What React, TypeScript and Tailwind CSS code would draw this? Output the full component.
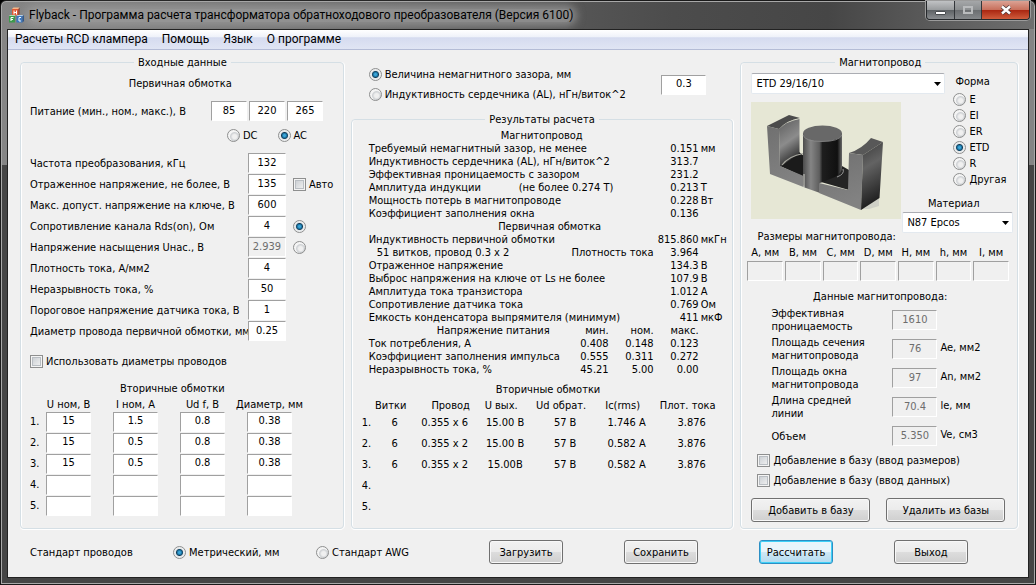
import React, { useState } from "react";

interface FieldProps {
  label: string;
  value?: string;
  width?: string;
  disabled?: boolean;
}

interface CheckProps {
  label: string;
}

interface RadioProps {
  name: string;
  label: string;
  checked?: boolean;
  hideLabel?: boolean;
}

interface DropDownProps {
  label: string;
  options: string[];
}

interface ButtonProps {
  label: string;
  className: string;
  primary?: boolean;
}

interface Result {
  label: string;
  value: string;
  unit?: string;
  limit?: string;
  note?: string;
  indent?: boolean;
}

const primaryRows = [
  { label: "Частота преобразования, кГц", value: "132" },
  { label: "Отраженное напряжение, не более, В", value: "135", extra: "auto" },
  { label: "Макс. допуст. напряжение на ключе, В", value: "600" },
  { label: "Сопротивление канала Rds(on), Ом", value: "4", extra: "rds" },
  { label: "Напряжение насыщения Uнас., В", value: "2.939", extra: "usat" },
  { label: "Плотность тока, А/мм2", value: "4" },
  { label: "Неразрывность тока, %", value: "50" },
  { label: "Пороговое напряжение датчика тока, В", value: "1" },
  { label: "Диаметр провода первичной обмотки, мм", value: "0.25" },
];

const secondaryColumns = ["U ном, В", "I ном, А", "Ud f, В", "Диаметр, мм"];

const secondaryInputs = [
  ["15", "1.5", "0.8", "0.38"],
  ["15", "0.5", "0.8", "0.38"],
  ["15", "0.5", "0.8", "0.38"],
  ["", "", "", ""],
  ["", "", "", ""],
];

const coreResults: Result[] = [
  { label: "Требуемый немагнитный зазор, не менее", value: "0.151", unit: "мм" },
  { label: "Индуктивность сердечника (AL), нГн/виток^2", value: "313.7" },
  { label: "Эффективная проницаемость с зазором", value: "231.2" },
  { label: "Амплитуда индукции", limit: "(не более 0.274 Т)", value: "0.213", unit: "Т" },
  { label: "Мощность потерь в магнитопроводе", value: "0.228", unit: "Вт" },
  { label: "Коэффициент заполнения окна", value: "0.136" },
];

const windingResults: Result[] = [
  { label: "Индуктивность первичной обмотки", value: "815.860", unit: "мкГн" },
  { label: "51 витков, провод 0.3 x 2", note: "Плотность тока", value: "3.964", indent: true },
  { label: "Отраженное напряжение", value: "134.3", unit: "В" },
  { label: "Выброс напряжения на ключе от Ls не более", value: "107.9", unit: "В" },
  { label: "Амплитуда тока транзистора", value: "1.012", unit: "А" },
  { label: "Сопротивление датчика тока", value: "0.769", unit: "Ом" },
  { label: "Емкость конденсатора выпрямителя (минимум)", value: "411", unit: "мкФ" },
];

const supplyResults = [
  ["Ток потребления, А", "0.408", "0.148", "0.123"],
  ["Коэффициент заполнения импульса", "0.555", "0.311", "0.272"],
  ["Неразрывность тока, %", "45.21", "5.00", "0.00"],
];

const outputColumns = ["Витки", "Провод", "U вых.", "Ud обрат.", "Ic(rms)", "Плот. тока"];

const outputResults = [
  ["6", "0.355 x 6", "15.00 В", "57 В", "1.746 А", "3.876"],
  ["6", "0.355 x 2", "15.00 В", "57 В", "0.582 А", "3.876"],
  ["6", "0.355 x 2", "15.00В", "57 В", "0.582 А", "3.876"],
  ["", "", "", "", "", ""],
  ["", "", "", "", "", ""],
];

const shapes = ["E", "EI", "ER", "ETD", "R", "Другая"];

const sizes = ["A, мм", "B, мм", "C, мм", "D, мм", "H, мм", "h, мм", "I, мм"];

const coreData = [
  { label: "Эффективная проницаемость", value: "1610", unit: "" },
  { label: "Площадь сечения магнитопровода", value: "76", unit: "Ae, мм2" },
  { label: "Площадь окна магнитопровода", value: "97", unit: "An, мм2" },
  { label: "Длина средней линии", value: "70.4", unit: "le, мм" },
  { label: "Объем", value: "5.350", unit: "Ve, см3" },
];

const Field: React.FC<FieldProps> = ({ label, value = "", width = "w-[45px]", disabled }) => {
  const [text, setText] = useState(value);
  return (
    <input
      type="text"
      aria-label={label}
      value={text}
      disabled={disabled}
      onChange={(e) => setText(e.target.value)}
      className={`${width} block h-5 border border-t-[#a0a0a0] border-l-[#a0a0a0] border-r-white border-b-white bg-white pb-0.5 text-center outline-none disabled:bg-[#f0f0f0] disabled:text-[#6d6d6d]`}
    />
  );
};

const Radio: React.FC<RadioProps> = ({ name, label, checked, hideLabel }) => (
  <label className="flex items-center gap-[3px] whitespace-nowrap">
    <input
      type="radio"
      name={name}
      aria-label={label}
      defaultChecked={checked}
      className="size-[13px] shrink-0 appearance-none rounded-full border border-[#8e8f8f] bg-[radial-gradient(circle_at_60%_60%,#f0f0f0_0_2px,#cdd0d3_4px,#f4f4f4_5px)] checked:bg-[radial-gradient(circle,#39a5d8_0_1px,#0b4f77_3px,#123a55_3px,#e4e8ea_4px,#f4f4f4_6px)]"
    />
    {!hideLabel && label}
  </label>
);

const Check: React.FC<CheckProps> = ({ label }) => (
  <label className="flex items-center gap-[3px] whitespace-nowrap">
    <input
      type="checkbox"
      className="size-[13px] shrink-0 appearance-none border border-[#8e8f8f] bg-[linear-gradient(135deg,#c4c9ce,#f6f6f6)] shadow-[inset_0_0_0_1px_#f4f4f4,inset_0_0_0_2px_#b9bec3] checked:bg-[#1a6a94]"
    />
    {label}
  </label>
);

const DropDown: React.FC<DropDownProps> = ({ label, options }) => (
  <div className="relative">
    <select
      aria-label={label}
      className="block h-[21px] w-full appearance-none rounded-xs border border-[#e3e9ef] border-t-[#abadb3] bg-white pr-5 pl-1 outline-none"
    >
      {options.map((o) => (
        <option key={o}>{o}</option>
      ))}
    </select>
    <svg viewBox="0 0 7 4" className="pointer-events-none absolute top-[9px] right-1 h-1 w-[7px]">
      <path d="M0 0h7L3.5 4z" fill="#000" />
    </svg>
  </div>
);

const Button: React.FC<ButtonProps> = ({ label, className, primary }) => (
  <button
    type="button"
    className={`${className} h-6 rounded-[3px] border text-center whitespace-nowrap ${
      primary
        ? "border-[#2c8fc4] bg-[linear-gradient(#e9f5fb_50%,#cfe8f5_50%,#b4dbef)] shadow-[inset_0_0_0_1px_#3fd0f7]"
        : "border-[#707070] bg-[linear-gradient(#f2f2f2,#ebebeb_50%,#dddddd_50%,#cfcfcf)] shadow-[inset_0_0_0_1px_#f8f8f8]"
    }`}
  >
    {label}
  </button>
);

const groupBox =
  "min-w-0 rounded-[4px] border border-[#d5dfe5] shadow-[inset_1px_0_0_#fff,0_1px_0_#fff,1px_0_0_#fff]";

const AppIcon = () => (
  <svg viewBox="0 0 16 16" className="size-4">
    <path d="M4 2l1.500-1.500h6L10.500 2z" fill="#f5b78a" />
    <rect x="4" y="2" width="6.500" height="6.500" fill="#e05a34" />
    <path d="M10.500 2l1-1.500v6.500l-1 1.500z" fill="#8e2a18" />
    <rect x="1" y="9" width="6" height="6.500" fill="#3d9a4c" />
    <path d="M1 9l1-1h5.500L7 9z" fill="#a7dcae" />
    <rect x="8.500" y="9" width="6" height="6.500" fill="#3a78c2" />
    <path d="M8.500 9l1-1H16l-1.500 1z" fill="#b5d3f2" />
    <path d="M14.500 9L16 8v6l-1.500 1.500z" fill="#1d4a86" />
    <path d="M6 3.500v4M8.500 3.500v4M6 5.500h2.500" stroke="#fff" fill="none" />
    <path d="M3 14v-3.500h2.500M3 12.500h2" stroke="#fff" fill="none" />
    <path d="M13 10.500h-2v3.500h2" stroke="#fff" fill="none" />
  </svg>
);

// ETD ferrite half: two outer legs, round centre post
const CorePicture = () => (
  <svg viewBox="0 0 150 117" className="h-[117px] w-[150px] bg-[#e6e7d5]" role="img">
    <defs>
      <linearGradient id="inner" x1="0" y1="0" x2="0.300" y2="1">
        <stop offset="0" stopColor="#5c5c5c" />
        <stop offset="0.550" stopColor="#8c8c8c" />
        <stop offset="1" stopColor="#2e2e2e" />
      </linearGradient>
      <linearGradient id="post" x1="0" x2="1" y1="0" y2="0">
        <stop offset="0" stopColor="#4c4c4c" />
        <stop offset="0.200" stopColor="#858585" />
        <stop offset="0.420" stopColor="#5e5e5e" />
        <stop offset="0.500" stopColor="#1e1e1e" />
        <stop offset="0.880" stopColor="#101010" />
        <stop offset="1" stopColor="#686868" />
      </linearGradient>
      <linearGradient id="side" x1="0" x2="0.200" y1="0" y2="1">
        <stop offset="0" stopColor="#3a3a3a" />
        <stop offset="0.400" stopColor="#636363" />
        <stop offset="1" stopColor="#1c1c1c" />
      </linearGradient>
      <linearGradient id="front" x1="0" x2="0.300" y1="0" y2="1">
        <stop offset="0" stopColor="#707070" />
        <stop offset="1" stopColor="#828282" />
      </linearGradient>
    </defs>
    <path d="M112 107L128 95V104L118 107z" fill="#cfd0c6" />
    <path d="M29 64L48 50L53 54V75z" fill="#1b1b1b" />
    <path d="M28 27Q36 19 48.500 17V51L29 65z" fill="url(#inner)" />
    <path d="M31 63Q38 54 52 51.500" stroke="#a9a9a0" strokeWidth="1.200" fill="none" />
    <path d="M16 24L38 13L49 16Q36 18 28 27z" fill="#4b4b4b" />
    <path d="M16 24L28 27L29 64L55 75V86L19 72z" fill="url(#front)" />
    <path d="M70 80L91 64L98 68V88z" fill="#242424" />
    <path d="M52 31V83L55 86L69 91V81L84 75Q91 71 91 65V31z" fill="url(#post)" />
    <path d="M86 75Q94 72 92 67" stroke="#999" strokeWidth="1" fill="none" />
    <ellipse cx="71.500" cy="31.500" rx="19.500" ry="8" fill="#686868" />
    <path d="M52 33Q54 39.500 71 39.500Q88 39.500 91 33" stroke="#8b8b8b" strokeWidth="0.800" fill="none" />
    <path d="M98 51Q111 47 120 36L132 40L112 53z" fill="#585858" />
    <path d="M98 51L112 53L110 108L68 91V81L97 88z" fill="url(#front)" />
    <path d="M112 53L132 40L128.500 96L110 108z" fill="url(#side)" />
    <path d="M53 72V85" stroke="#d3d3cb" strokeWidth="1" />
  </svg>
);

const TitleBar = () => (
  <header className="flex h-7 items-start justify-between pr-[5px] pl-[7px]">
    <div className="mt-1 flex h-5 items-center gap-[5px] font-[family-name:Roboto,sans-serif] text-[12px] whitespace-nowrap">
      <AppIcon />
      <h1 className="rounded-full bg-[#a0a0a0]/70 shadow-[0_0_8px_4px_rgb(160_160_160/0.7)]">
        Flyback - Программа расчета трансформатора обратноходового преобразователя (Версия 6100)
      </h1>
    </div>
    <div className="flex h-[19px] overflow-hidden rounded-b-[4px] border border-t-0 border-[#25282b] shadow-[0_0_0_1px_#9b9b9b]">
      <button type="button" aria-label="Свернуть" className="flex w-7 items-end justify-center border-r border-[#33363a] bg-[linear-gradient(#c0c2c4,#999c9e_48%,#5c6063_50%,#8a8d90)] pb-1">
        <span className="h-1 w-[11px] rounded-[1px] border border-[#4a4d50] bg-white" />
      </button>
      <button type="button" aria-label="Развернуть" className="flex w-[27px] items-center justify-center border-r border-[#33363a] bg-[linear-gradient(#a5a7a9,#8b8e90_48%,#6a6d70_50%,#85888b)]">
        <span className="h-2 w-[10px] border-2 border-[#b9bbbd]" />
      </button>
      <button type="button" aria-label="Закрыть" className="flex w-[47px] items-center justify-center bg-[linear-gradient(#dba294,#c8705c_48%,#a92510_50%,#cf5c3c)]">
        <svg viewBox="0 0 12 10" className="h-[10px] w-3">
          <path d="M2 1.500L10 8.500M10 1.500L2 8.500" stroke="#4e3a3a" strokeWidth="4" />
          <path d="M2 1.500L10 8.500M10 1.500L2 8.500" stroke="#fff" strokeWidth="2.400" />
        </svg>
      </button>
    </div>
  </header>
);

const MenuBar = () => (
  <nav className="flex h-5 items-center gap-[14px] border-b border-[#b4bcd6] bg-[linear-gradient(#ffffff,#eef1f9_38%,#d5dbef_40%,#e0e5f4)] pl-[7px] font-[family-name:Roboto,sans-serif] text-[12px] whitespace-nowrap">
    {["Расчеты RCD клампера", "Помощь", "Язык", "О программе"].map((item) => (
      <a key={item} href="#">
        {item}
      </a>
    ))}
  </nav>
);

const InputPanel = () => (
  <fieldset className={`${groupBox} pr-2 pl-[9px]`}>
    <legend className="mx-auto px-1">Входные данные</legend>
    <h2 className="mt-2 pr-1 text-center">Первичная обмотка</h2>
    <div className="mt-[11px] flex items-center gap-[2px]">
      <span className="w-[179px]">Питание (мин., ном., макс.), В</span>
      <Field label="Питание мин." value="85" width="w-9" />
      <Field label="Питание ном." value="220" width="w-9" />
      <Field label="Питание макс." value="265" width="w-9" />
    </div>
    <div className="mt-2 flex gap-5 pl-[197px]">
      <Radio name="supply" label="DC" />
      <Radio name="supply" label="AC" checked />
    </div>
    <div className="mt-[11px] flex flex-col gap-px">
      {primaryRows.map((row) => (
        <div key={row.label} className="flex items-center whitespace-nowrap">
          <span className="w-[218px]">{row.label}</span>
          <Field label={row.label} value={row.value} width="w-[38px]" disabled={row.extra === "usat"} />
          <div className="ml-[7px]">
            {row.extra === "auto" && <Check label="Авто" />}
            {row.extra === "rds" && <Radio name="switch" label="Rds(on)" checked hideLabel />}
            {row.extra === "usat" && <Radio name="switch" label="Uнас." hideLabel />}
          </div>
        </div>
      ))}
    </div>
    <div className="mt-[14px]">
      <Check label="Использовать диаметры проводов" />
    </div>
    <h2 className="mt-[14px] pr-5 text-center">Вторичные обмотки</h2>
    <table className="mt-[3px]">
      <thead>
        <tr>
          <th className="w-4" />
          {secondaryColumns.map((c) => (
            <th key={c} className="w-[67px] pr-[22px] font-normal whitespace-nowrap">
              <span className="-mx-3 block">{c}</span>
            </th>
          ))}
        </tr>
      </thead>
      <tbody>
        {secondaryInputs.map((row, i) => (
          <tr key={i} className="h-[21px]">
            <td>{i + 1}.</td>
            {row.map((v, j) => (
              <td key={j}>
                <Field label={`${secondaryColumns[j]} ${i + 1}`} value={v} />
              </td>
            ))}
          </tr>
        ))}
      </tbody>
    </table>
  </fieldset>
);

const ResultRows = ({ rows }: { rows: Result[] }) => (
  <>
    {rows.map((row) => (
      <tr key={row.label}>
        <td className={row.indent ? "pl-2" : ""}>
          {row.limit ? (
            <div className="flex">
              <span className="w-[150px] shrink-0">{row.label}</span>
              <span>{row.limit}</span>
            </div>
          ) : (
            row.label
          )}
        </td>
        <td colSpan={2} className="text-right">
          {row.note}
        </td>
        <td className="text-right">{row.value}</td>
        <td className="pl-[2px]">{row.unit}</td>
      </tr>
    ))}
  </>
);

const ResultPanel = () => (
  <div className="flex min-w-0 flex-col">
    <div className="flex items-center justify-between pt-3 pr-[27px] pl-[18px]">
      <div className="flex flex-col gap-[7px]">
        <Radio name="gap" label="Величина немагнитного зазора, мм" checked />
        <Radio name="gap" label="Индуктивность сердечника (AL), нГн/виток^2" />
      </div>
      <Field label="Величина зазора" value="0.3" />
    </div>
    <fieldset className={`${groupBox} mt-3 grow`}>
      <legend className="mx-auto px-1">Результаты расчета</legend>
      <table className="mt-[3px] ml-[17px] w-[362px] table-fixed whitespace-nowrap">
        <colgroup>
          <col className="w-[195px]" />
          <col className="w-[45px]" />
          <col className="w-[45px]" />
          <col className="w-[45px]" />
          <col className="w-[32px]" />
        </colgroup>
        <tbody>
          <tr>
            <th colSpan={5} className="pr-4 font-normal">Магнитопровод</th>
          </tr>
          <ResultRows rows={coreResults} />
          <tr>
            <th colSpan={5} className="font-normal">Первичная обмотка</th>
          </tr>
          <ResultRows rows={windingResults} />
          <tr>
            <th className="pr-[14px] text-right font-normal">Напряжение питания</th>
            <th className="text-right font-normal">мин.</th>
            <th className="text-right font-normal">ном.</th>
            <th className="text-right font-normal">макс.</th>
          </tr>
          {supplyResults.map(([label, ...values]) => (
            <tr key={label}>
              <td>{label}</td>
              {values.map((v, i) => (
                <td key={i} className="text-right">
                  {v}
                </td>
              ))}
            </tr>
          ))}
        </tbody>
      </table>
      <h2 className="mt-[7px] pl-3 text-center">Вторичные обмотки</h2>
      <table className="mt-[3px] ml-[10px] w-[365px] table-fixed text-center whitespace-nowrap">
        <colgroup>
          <col className="w-[15px]" />
          <col className="w-[36px]" />
          <col className="w-[64px]" />
          <col className="w-[57px]" />
          <col className="w-[63px]" />
          <col className="w-[60px]" />
          <col className="w-[70px]" />
        </colgroup>
        <thead>
          <tr>
            <th />
            {outputColumns.map((c) => (
              <th key={c} className="font-normal">
                <span className={c === "Витки" ? "-mx-2 block pr-2" : c === "Провод" ? "pl-3" : "pr-2"}>{c}</span>
              </th>
            ))}
          </tr>
        </thead>
        <tbody>
          {outputResults.map((row, i) => (
            <tr key={i} className="h-[21px]">
              <td className="text-left">{i + 1}.</td>
              {row.map((v, j) => (
                <td key={j}>{v}</td>
              ))}
            </tr>
          ))}
        </tbody>
      </table>
    </fieldset>
  </div>
);

const CorePanel = () => (
  <fieldset className={`${groupBox} pr-1 pl-[6px]`}>
    <legend className="mx-auto px-1">Магнитопровод</legend>
    <div className="mt-1 grid grid-cols-[151px_43px_1fr] grid-rows-[20px_102px_38px] pl-1">
      <div className="col-span-2">
        <DropDown label="Магнитопровод" options={["ETD 29/16/10"]} />
      </div>
      <div role="radiogroup" aria-label="Форма" className="row-span-2 pt-[2px] pl-2">
        <div className="mb-[5px] pl-[2px]">Форма</div>
        <div className="flex flex-col gap-[3px]">
          {shapes.map((s) => (
            <Radio key={s} name="shape" label={s} checked={s === "ETD"} />
          ))}
        </div>
      </div>
      <div className="row-span-2 pt-[9px]">
        <CorePicture />
        <h2 className="mt-[11px] pl-[6px] whitespace-nowrap">Размеры магнитопровода:</h2>
      </div>
      <div className="col-span-2 col-start-2 pt-[2px]">
        <div className="mb-[2px] pr-2 text-center">Материал</div>
        <DropDown label="Материал" options={["N87 Epcos"]} />
      </div>
    </div>
    <div className="mt-[13px] grid grid-cols-7 gap-[2px] pr-1">
      {sizes.map((s) => (
        <div key={s} className="text-center whitespace-nowrap">
          <div className="mb-[2px]">{s}</div>
          <Field label={s} width="w-full" disabled />
        </div>
      ))}
    </div>
    <h2 className="mt-[9px] text-center">Данные магнитопровода:</h2>
    <div className="mt-1 flex flex-col gap-[3px] pl-6">
      {coreData.map((row) => (
        <div key={row.label} className="flex h-[26px] items-center">
          <span className="w-[121px] pr-6">{row.label}</span>
          <Field label={row.label} value={row.value} disabled />
          <span className="pb-1 pl-[3px] whitespace-nowrap">{row.unit}</span>
        </div>
      ))}
    </div>
    <div className="mt-[5px] flex flex-col gap-[7px] pl-[10px]">
      <Check label="Добавление в базу (ввод размеров)" />
      <Check label="Добавление в базу (ввод данных)" />
    </div>
    <div className="mt-[11px] mb-[5px] flex gap-4 pl-1">
      <Button label="Добавить в базу" className="w-[119px]" />
      <Button label="Удалить из базы" className="w-[119px]" />
    </div>
  </fieldset>
);

const Footer = () => (
  <footer className="flex items-center pt-[11px] pb-[13px] pl-[22px] whitespace-nowrap">
    <span className="w-[143px]">Стандарт проводов</span>
    <div className="w-[143px]">
      <Radio name="standard" label="Метрический, мм" checked />
    </div>
    <div className="w-[173px]">
      <Radio name="standard" label="Стандарт AWG" />
    </div>
    <div className="flex gap-[61px]">
      <Button label="Загрузить" className="w-[74px]" />
      <Button label="Сохранить" className="w-[74px]" />
      <Button label="Рассчитать" className="w-[74px]" primary />
      <Button label="Выход" className="w-[74px]" />
    </div>
  </footer>
);

const App: React.FC = () => {
  return (
    <div className="min-h-screen bg-black font-[family-name:'DejaVu_Sans_Condensed','DejaVu_Sans',sans-serif] text-[11px] leading-[13px] text-black">
      <div className="flex min-h-screen flex-col rounded-t-[6px] border border-[#1a1a1a] bg-[linear-gradient(90deg,#858585,#6f6f6f_30%,#4c4c4c_65%,#464646_80%,#6f6f6f)] shadow-[inset_0_0_0_1px_#a8a8a8]">
        <TitleBar />
        <div className="mx-px mb-px flex grow flex-col bg-[linear-gradient(#858585_0_136px,#454545_136px)] px-[5px] pb-[5px]">
          <main className="flex grow flex-col border border-[#222] bg-[#f0f0f0]">
            <MenuBar />
            <div className="grid grow grid-cols-[323fr_382fr_277fr] gap-[7px] pt-[6px] pr-[10px] pl-3">
              <InputPanel />
              <ResultPanel />
              <CorePanel />
            </div>
            <Footer />
          </main>
        </div>
      </div>
    </div>
  );
};

export default App;
